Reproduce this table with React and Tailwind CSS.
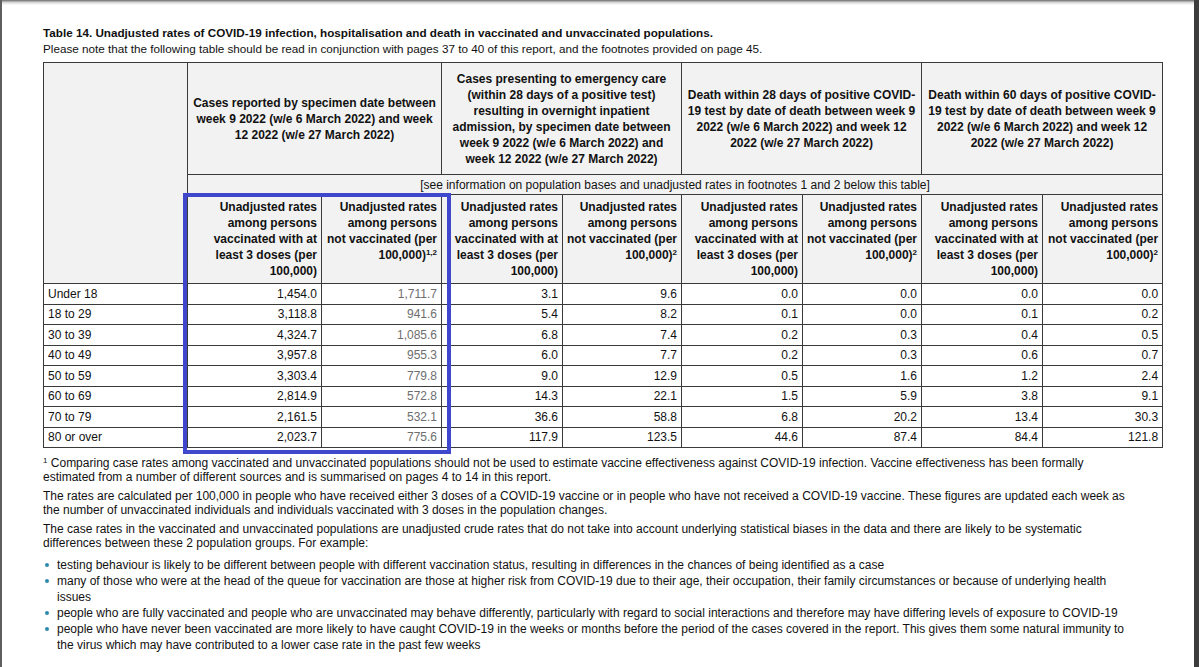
const rows = [
  ["Under 18", "1,454.0", "1,711.7", "3.1", "9.6", "0.0", "0.0", "0.0", "0.0"],
  ["18 to 29", "3,118.8", "941.6", "5.4", "8.2", "0.1", "0.0", "0.1", "0.2"],
  ["30 to 39", "4,324.7", "1,085.6", "6.8", "7.4", "0.2", "0.3", "0.4", "0.5"],
  ["40 to 49", "3,957.8", "955.3", "6.0", "7.7", "0.2", "0.3", "0.6", "0.7"],
  ["50 to 59", "3,303.4", "779.8", "9.0", "12.9", "0.5", "1.6", "1.2", "2.4"],
  ["60 to 69", "2,814.9", "572.8", "14.3", "22.1", "1.5", "5.9", "3.8", "9.1"],
  ["70 to 79", "2,161.5", "532.1", "36.6", "58.8", "6.8", "20.2", "13.4", "30.3"],
  ["80 or over", "2,023.7", "775.6", "117.9", "123.5", "44.6", "87.4", "84.4", "121.8"],
]

const widths = [144, 134, 120, 121, 119, 121, 119, 121, 120]

const cell = "border border-[#3a3a3a]"

function Vaccinated() {
  return (
    <>
      Unadjusted rates<br />
      among persons<br />
      vaccinated with at<br />
      least 3 doses (per<br />
      100,000)
    </>
  )
}

function NotVaccinated({ note }) {
  return (
    <>
      Unadjusted rates<br />
      among persons<br />
      not vaccinated (per<br />
      100,000)<sup className="text-[8px]">{note}</sup>
    </>
  )
}

function Bullet({ children }) {
  return (
    <li className="flex">
      <span className="w-[14px] shrink-0 flex pt-[6px] pl-[2px]">
        <span className="block w-[4px] h-[4px] rounded-full bg-[#2b8cad]" />
      </span>
      <span>{children}</span>
    </li>
  )
}

export default function App() {
  return (
    <div className="flex h-[667px] w-[1199px] overflow-hidden bg-[#3d3d3d] font-['Liberation_Sans',Arial,sans-serif] text-[12px] text-[#111]">
      <div className="w-[1194px] border-l-2 border-[#5f5f5f] bg-white">
        <div className="h-[5px] bg-gradient-to-b from-[#6f6f6f] via-[#d8d8d8] to-white" />
        <div className="pl-[41px] pt-[20px]">
          <h1 className="font-bold text-[11.7px] leading-[16px] whitespace-nowrap">
            Table 14. Unadjusted rates of COVID-19 infection, hospitalisation and death in vaccinated and unvaccinated populations.
          </h1>
          <p className="text-[11.7px] leading-[16px] whitespace-nowrap">
            Please note that the following table should be read in conjunction with pages 37 to 40 of this report, and the footnotes provided on page 45.
          </p>

          <div className="relative mt-[5px] w-[1119px]">
            <table className="table-fixed border-collapse w-[1119px] leading-[16px]">
              <colgroup>
                {widths.map((w, i) => (
                  <col key={i} style={{ width: w }} />
                ))}
              </colgroup>
              <thead>
                <tr className="h-[112px]">
                  <th rowSpan={3} className={`${cell} bg-[#f2f2f2]`} />
                  <th colSpan={2} className={`${cell} bg-[#f2f2f2] font-bold text-center align-middle`}>
                    Cases reported by specimen date between<br />
                    week 9 2022 (w/e 6 March 2022) and week<br />
                    12 2022 (w/e 27 March 2022)
                  </th>
                  <th colSpan={2} className={`${cell} bg-[#f2f2f2] font-bold text-center align-middle`}>
                    Cases presenting to emergency care<br />
                    (within 28 days of a positive test)<br />
                    resulting in overnight inpatient<br />
                    admission, by specimen date between<br />
                    week 9 2022 (w/e 6 March 2022) and<br />
                    week 12 2022 (w/e 27 March 2022)
                  </th>
                  <th colSpan={2} className={`${cell} bg-[#f2f2f2] font-bold text-center align-middle`}>
                    Death within 28 days of positive COVID-<br />
                    19 test by date of death between week 9<br />
                    2022 (w/e 6 March 2022) and week 12<br />
                    2022 (w/e 27 March 2022)
                  </th>
                  <th colSpan={2} className={`${cell} bg-[#f2f2f2] font-bold text-center align-middle`}>
                    Death within 60 days of positive COVID-<br />
                    19 test by date of death between week 9<br />
                    2022 (w/e 6 March 2022) and week 12<br />
                    2022 (w/e 27 March 2022)
                  </th>
                </tr>
                <tr className="h-[20px]">
                  <th colSpan={8} className={`${cell} bg-[#f2f2f2] font-normal text-center`}>
                    [see information on population bases and unadjusted rates in footnotes 1 and 2 below this table]
                  </th>
                </tr>
                <tr className="h-[89px]">
                  {[0, 1, 2, 3].map((g) => (
                    <>
                      <th key={`v${g}`} className={`${cell} bg-[#f2f2f2] font-bold text-right align-top pt-[4px] pr-[4px]`}>
                        <Vaccinated />
                      </th>
                      <th key={`n${g}`} className={`${cell} bg-[#f2f2f2] font-bold text-right align-top pt-[4px] pr-[4px]`}>
                        <NotVaccinated note={g === 0 ? "1,2" : "2"} />
                      </th>
                    </>
                  ))}
                </tr>
              </thead>
              <tbody>
                {rows.map((r) => (
                  <tr key={r[0]} className="h-[20.5px]">
                    <td className={`${cell} pl-[4px] text-left`}>{r[0]}</td>
                    {r.slice(1).map((v, i) => (
                      <td
                        key={i}
                        className={`${cell} pr-[4px] text-right ${i === 1 ? "text-[#6e6e6e]" : ""}`}
                      >
                        {v}
                      </td>
                    ))}
                  </tr>
                ))}
              </tbody>
            </table>
            <div className="absolute left-[140px] top-[131px] w-[268px] h-[261px] border-4 border-[#3f48cc] pointer-events-none" />
          </div>

          <div className="mt-[8px] leading-[14px] whitespace-nowrap">
            <p>
              <sup className="text-[8px]">1</sup> Comparing case rates among vaccinated and unvaccinated populations should not be used to estimate vaccine effectiveness against COVID-19 infection. Vaccine effectiveness has been formally<br />
              estimated from a number of different sources and is summarised on pages 4 to 14 in this report.
            </p>
            <p className="mt-[5px]">
              The rates are calculated per 100,000 in people who have received either 3 doses of a COVID-19 vaccine or in people who have not received a COVID-19 vaccine. These figures are updated each week as<br />
              the number of unvaccinated individuals and individuals vaccinated with 3 doses in the population changes.
            </p>
            <p className="mt-[5px]">
              The case rates in the vaccinated and unvaccinated populations are unadjusted crude rates that do not take into account underlying statistical biases in the data and there are likely to be systematic<br />
              differences between these 2 population groups. For example:
            </p>
          </div>

          <ul className="mt-[7px] leading-[16px] whitespace-nowrap">
            <Bullet>testing behaviour is likely to be different between people with different vaccination status, resulting in differences in the chances of being identified as a case</Bullet>
            <Bullet>
              many of those who were at the head of the queue for vaccination are those at higher risk from COVID-19 due to their age, their occupation, their family circumstances or because of underlying health<br />
              issues
            </Bullet>
            <Bullet>people who are fully vaccinated and people who are unvaccinated may behave differently, particularly with regard to social interactions and therefore may have differing levels of exposure to COVID-19</Bullet>
            <Bullet>
              people who have never been vaccinated are more likely to have caught COVID-19 in the weeks or months before the period of the cases covered in the report. This gives them some natural immunity to<br />
              the virus which may have contributed to a lower case rate in the past few weeks
            </Bullet>
          </ul>
        </div>
      </div>
    </div>
  )
}
